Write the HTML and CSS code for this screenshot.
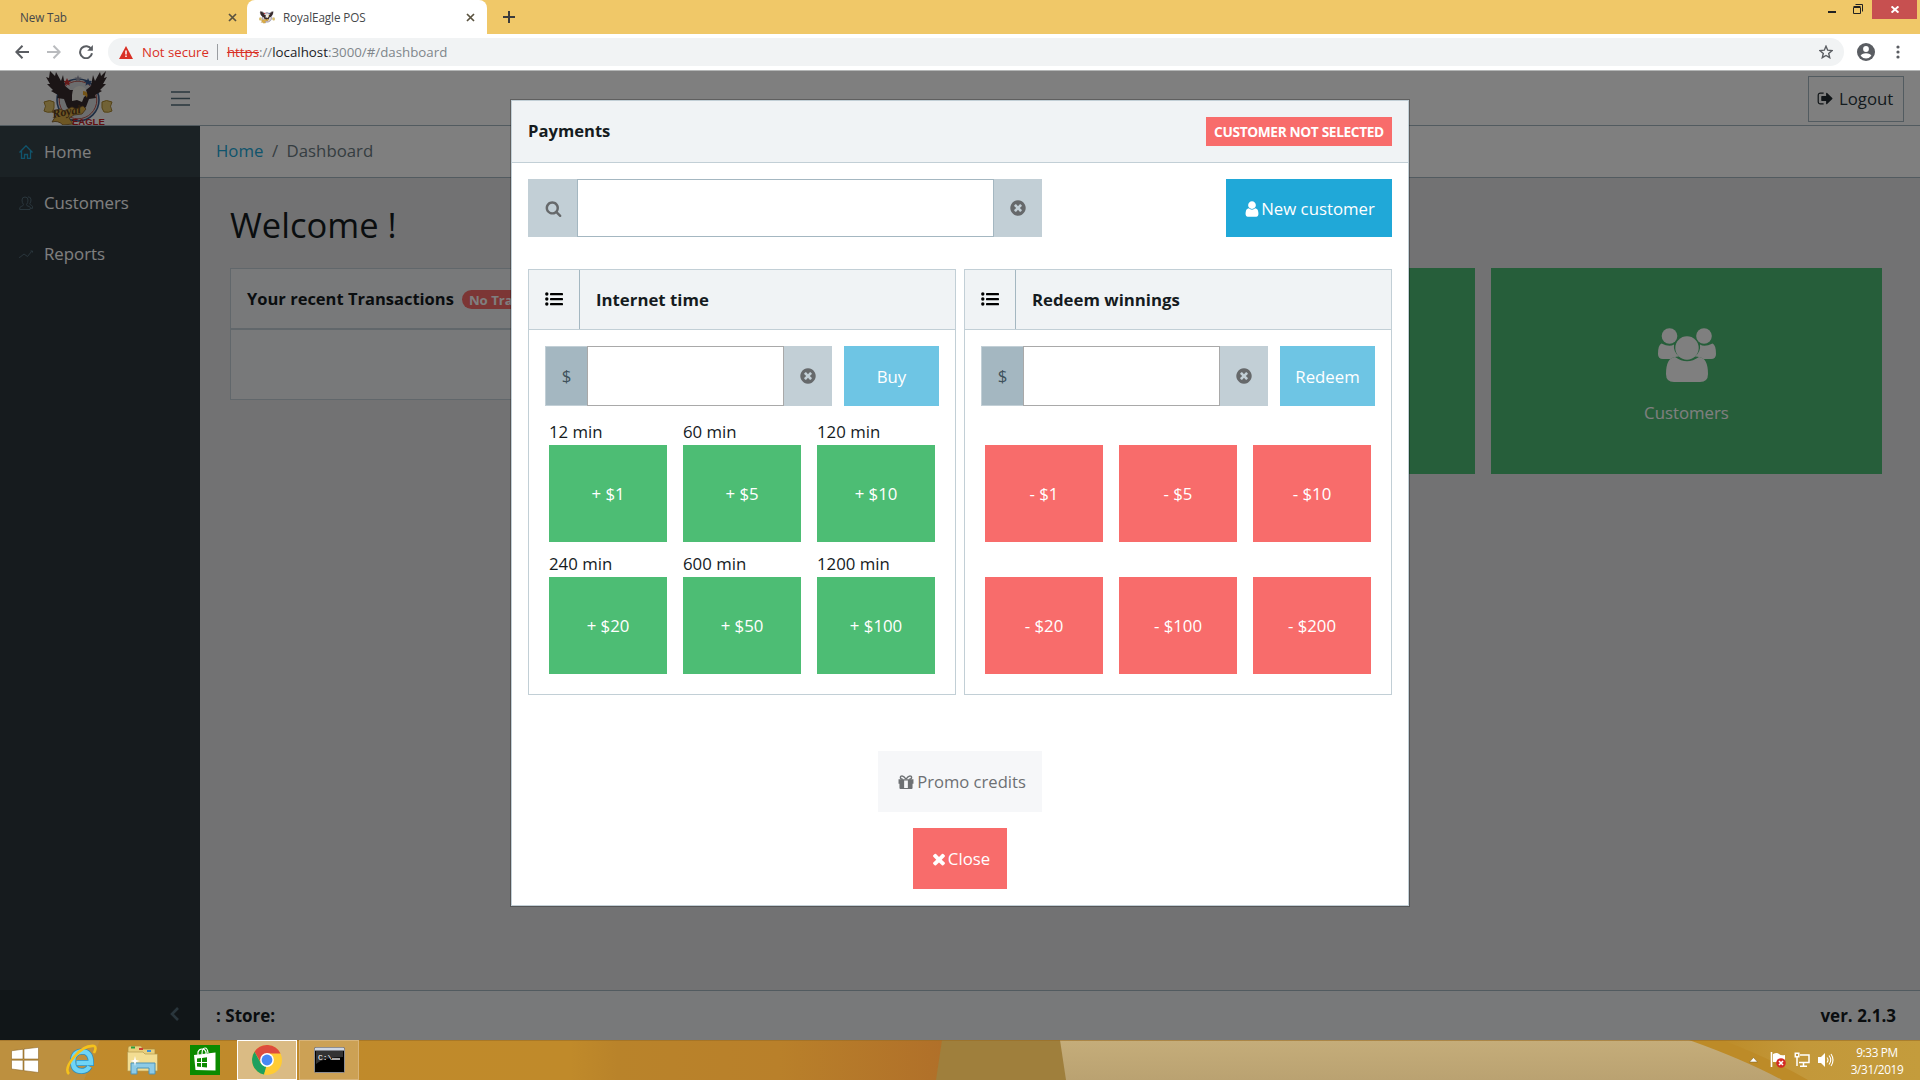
FILE: index.html
```html
<!DOCTYPE html>
<html lang="en">
<head>
<meta charset="utf-8">
<title>RoyalEagle POS</title>
<link rel="stylesheet" href="styles.css">
</head>
<body>
<svg class="defs" width="0" height="0">
  <symbol id="i-clear" viewBox="0 0 1792 1792"><path d="M1277 1122q0-26-19-45l-181-181 181-181q19-19 19-45 0-27-19-46l-90-90q-19-19-46-19-26 0-45 19l-181 181-181-181q-19-19-45-19-27 0-46 19l-90 90q-19 19-19 46 0 26 19 45l181 181-181 181q-19 19-19 45 0 27 19 46l90 90q19 19 46 19 26 0 45-19l181-181 181 181q19 19 45 19 27 0 46-19l90-90q19-19 19-46zm387-226q0 209-103 385.500t-279.500 279.500-385.500 103-385.500-103-279.500-279.500-103-385.500 103-385.500 279.500-279.500 385.500-103 385.500 103 279.500 279.500 103 385.500z"/></symbol>
  <symbol id="i-list" viewBox="0 0 18 14"><circle cx="1.8" cy="2" r="1.7"/><circle cx="1.8" cy="7" r="1.7"/><circle cx="1.8" cy="12" r="1.7"/><rect x="5" y="1" width="13" height="2.2" rx=".4"/><rect x="5" y="6" width="13" height="2.2" rx=".4"/><rect x="5" y="11" width="13" height="2.2" rx=".4"/></symbol>
  <symbol id="i-eagle" viewBox="0 0 70 54">
    <circle cx="35" cy="29" r="21" fill="#d9dadd" stroke="#3c5a86" stroke-width="1.6"/>
    <circle cx="35" cy="29" r="18.800" fill="none" stroke="#b8524c" stroke-width="1"/>
    <path d="M24 7l1.200 2.700 3 .2-2.300 1.900.8 2.900-2.700-1.600-2.600 1.600.8-2.900-2.300-1.900 3-.2z" fill="#c33"/>
    <path d="M35 4l1 2.500h2.600l-2 1.700.7 2.600-2.300-1.500-2.300 1.500.7-2.600-2-1.700H34z" fill="#99a"/>
    <path d="M45 7l1.200 2.700 3 .2-2.300 1.900.8 2.900-2.700-1.600-2.600 1.600.8-2.900-2.300-1.900 3-.2z" fill="#36578a"/>
    <path d="M1 31q6-3 10 0 1 7-2 10-5 1-8-1 3-5 0-9zM69 31q-6-3-10 0-1 7 2 10 5 1 8-1-3-5 0-9z" fill="#e3c56c" stroke="#a8852e"/>
    <path d="M7 0l5 5 1-4 5 9 2-6 2 11 5 4h16l5-4 2-11 2 6 5-9 1 4 5-5-2 7 3-1-4 7 3 0-6 6 2 1-7 4 1 3-7 1-3 8-7 7H31l-7-7-3-8-7-1 1-3-7-4 2-1-6-6h3L3 6l3 1z" fill="#362a2d"/>
    <path d="M29 24q0-8 7-9 8 0 8 9l-3 2-2 5-5-2-5 1z" fill="#efece4"/>
    <path d="M40 20q6 0 4 7-1-3-4-3z" fill="#e9a92f"/>
    <path d="M9 41l8-3 4 2 8-4 4 2 7-3 3 3-4 5-8 1-5 3 4 6-10 1q-5-5-11-3l5-8z" fill="#dcae49" stroke="#7d5925" stroke-width=".8"/>
  </symbol>
</svg>

<div class="tabs">
  <div class="tab"><span>New Tab</span><svg class="x" viewBox="0 0 9 9"><path d="M1 1l7 7M8 1L1 8"/></svg></div>
  <div class="tab active"><svg class="favicon"><use href="#i-eagle"/></svg><span>RoyalEagle POS</span><svg class="x" viewBox="0 0 9 9"><path d="M1 1l7 7M8 1L1 8"/></svg></div>
  <svg class="plus" viewBox="0 0 12 12"><path d="M6 0v12M0 6h12"/></svg>
  <div class="win">
    <svg width="8" height="2"><rect width="8" height="2" fill="#222"/></svg>
    <svg class="restore" width="10" height="10" fill="none" stroke="#222"><path d="M2.500.5h7v7" /><path d="M.5 3.500h7v6h-7zM.5 2.500h7"/></svg>
    <div class="win-close"><svg width="8" height="7" viewBox="0 0 8 7"><path d="M.6.4l6.800 6.200M7.400.4L.6 6.600" stroke="#fff" stroke-width="1.900"/></svg></div>
  </div>
</div>

<div class="toolbar">
  <svg class="nav" viewBox="0 0 14 14"><path d="M14 7H1.500M7.500.8L1.300 7l6.200 6.200"/></svg>
  <svg class="nav off" viewBox="0 0 14 14"><path d="M0 7h12.500M6.500.8L12.700 7l-6.200 6.200"/></svg>
  <svg class="nav" viewBox="0 0 14 14"><path d="M12.300 4.200A6 6 0 1 0 13 8.300"/><path d="M13.900 0v5.800H8.200z" class="solid"/></svg>
  <div class="omnibox">
    <svg width="14" height="13" viewBox="0 0 14 13"><path d="M7 0l7 13H0z" fill="#d93025"/><path d="M7 4.500v4M7 9.500v1.600" stroke="#fff" stroke-width="1.500"/></svg>
    <span class="insecure">Not secure</span>
    <span class="url"><s>https</s>://<b>localhost</b>:3000/#/dashboard</span>
    <svg class="star" width="14" height="14" viewBox="0 0 14 14"><path d="M7 1.200l1.700 4 4.300.4-3.300 2.900 1 4.200L7 10.500l-3.700 2.200 1-4.200L1 5.600l4.300-.4z"/></svg>
  </div>
  <svg class="avatar" width="18" height="18" viewBox="0 0 18 18"><circle cx="9" cy="9" r="9" fill="#5a5d62"/><circle cx="9" cy="6" r="2.900" fill="#fff"/><path d="M3.600 12.800q1-2.600 5.400-2.600t5.400 2.600Q12.300 15.500 9 15.500t-5.400-2.700z" fill="#fff"/></svg>
  <svg class="dots" width="4" height="14"><circle cx="2" cy="2" r="1.600"/><circle cx="2" cy="7" r="1.600"/><circle cx="2" cy="12" r="1.600"/></svg>
</div>

<div class="app">
  <header class="app-header">
    <svg class="logo" viewBox="0 0 70 54"><use href="#i-eagle" width="70" height="54"/><text x="10" y="47" transform="rotate(-10 10 47)" class="logo-script">Royal</text><text x="29" y="53.500" class="logo-block">EAGLE</text></svg>
    <svg class="burger" width="19" height="15"><path d="M0 1h19M0 7.500h19M0 14h19"/></svg>
    <div class="logout"><svg width="17" height="17" viewBox="0 0 1792 1792"><path d="M704 1440q0 4 1 20t.5 26.500-3 23.500-10 19.500-20.500 6.500h-320q-119 0-203.500-84.500t-84.500-203.500v-704q0-119 84.500-203.500t203.500-84.500h320q13 0 22.500 9.500t9.500 22.500q0 4 1 20t.5 26.500-3 23.500-10 19.500-20.500 6.500h-320q-66 0-113 47t-47 113v704q0 66 47 113t113 47h312l11.500 1 11.500 3 8 5.500 7 9 2 13.500zm928-544q0 26-19 45l-544 544q-19 19-45 19t-45-19-19-45v-288h-448q-26 0-45-19t-19-45v-384q0-26 19-45t45-19h448v-288q0-26 19-45t45-19 45 19l544 544q19 19 19 45z"/></svg><span>Logout</span></div>
  </header>
  <div class="app-body">
    <nav class="sidebar">
      <div class="item current"><svg viewBox="0 0 14 14"><path d="M.5 7.500L7 .8l6.500 6.700M2.500 6v7.500H5.500V9.500h3v4h3V6"/></svg>Home</div>
      <div class="item"><svg viewBox="0 0 14 14"><path d="M3 4q0-3 3-3t3 3-1.500 4.500q0 1.500 2.500 2t1 3H.7q-.5-2.500 1.500-3t2.300-2Q3 7 3 4zM9 .8q3 0 3 3 0 2.500-1.200 3.700.2 1.500 1.800 2t1 2.800h-2"/></svg>Customers</div>
      <div class="item"><svg viewBox="0 0 14 14"><path d="M0 10.500l1-.3L5 7l3.500 2.500 4-5M11.500 4h2v1.500"/></svg>Reports</div>
      <div class="minimizer"><svg width="9" height="14" viewBox="0 0 9 14"><path d="M8 1L2 7l6 6"/></svg></div>
    </nav>
    <main class="main">
      <div class="crumbs"><span class="link">Home</span><span>/</span><span>Dashboard</span></div>
      <div class="content">
        <h1>Welcome !</h1>
        <div class="tiles">
          <section class="recent">
            <div class="recent-head">Your recent Transactions <span class="pill">No Transactions</span></div>
            <div class="recent-body"></div>
          </section>
          <div class="tile"></div>
          <div class="tile">
            <svg width="58" height="54" viewBox="0 0 58 54"><circle cx="11.500" cy="8" r="7.800"/><circle cx="46" cy="8" r="7.800"/><path d="M3.500 15.500q8 4 12.500 1-1 7 5 12-6 0-8.500 2.500H5q-5 0-5-5 0-9 3.500-10.500zM54.500 15.500q-8 4-12.500 1 1 7-5 12 6 0 8.500 2.500H53q5 0 5-5 0-9-3.500-10.500z"/><circle cx="29" cy="20" r="11.700"/><path d="M17 29q12 8.500 24 0 9 1 9 17 0 8-8 8H16q-8 0-8-8 0-16 9-17z"/></svg>
            <span>Customers</span>
          </div>
        </div>
      </div>
      <footer class="app-footer"><span>: Store:</span><span>ver. 2.1.3</span></footer>
    </main>
  </div>
  <div class="backdrop"></div>
</div>

<div class="modal">
  <div class="modal-card">
    <div class="modal-head"><span class="modal-title">Payments</span><span class="badge">CUSTOMER NOT SELECTED</span></div>
    <div class="modal-body">
      <div class="search-row">
        <div class="group search">
          <div class="addon plain"><svg width="17" height="17" viewBox="0 0 1792 1792"><path d="M1216 832q0-185-131.500-316.500t-316.500-131.500-316.500 131.500-131.500 316.500 131.500 316.500 316.500 131.500 316.500-131.500 131.500-316.500zm512 832q0 52-38 90t-90 38q-54 0-90-38l-343-342q-179 124-399 124-143 0-273.500-55.500t-225-150-150-225-55.500-273.500 55.500-273.500 150-225 225-150 273.500-55.500 273.500 55.500 225 150 150 225 55.500 273.500q0 220-124 399l343 343q37 37 37 90z"/></svg></div>
          <div class="field"></div>
          <div class="clear"><svg width="18" height="18"><use href="#i-clear"/></svg></div>
        </div>
        <div class="btn primary"><svg width="18" height="18" viewBox="0 0 1792 1792"><path d="M1536 1399q0 109-62.500 187t-150.500 78h-854q-88 0-150.500-78t-62.500-187q0-85 8.500-160.500t31.500-152 58.500-131 94-89 134.500-34.500q131 128 313 128t313-128q76 0 134.500 34.500t94 89 58.500 131 31.500 152 8.500 160.500zm-256-887q0 159-112.500 271.500t-271.500 112.500-271.500-112.500-112.500-271.500 112.500-271.500 271.500-112.500 271.500 112.500 112.500 271.500z"/></svg>New customer</div>
      </div>
      <div class="panels">
        <section class="panel">
          <div class="panel-head"><div class="panel-icon"><svg width="18" height="14"><use href="#i-list"/></svg></div><span>Internet time</span></div>
          <div class="panel-body">
            <div class="amount">
              <div class="group"><div class="addon">$</div><div class="field gray"></div><div class="clear"><svg width="18" height="18"><use href="#i-clear"/></svg></div></div>
              <div class="btn pale">Buy</div>
            </div>
            <div class="grid">
              <div><label>12 min</label><div class="cash add">+ $1</div></div>
              <div><label>60 min</label><div class="cash add">+ $5</div></div>
              <div><label>120 min</label><div class="cash add">+ $10</div></div>
              <div><label>240 min</label><div class="cash add">+ $20</div></div>
              <div><label>600 min</label><div class="cash add">+ $50</div></div>
              <div><label>1200 min</label><div class="cash add">+ $100</div></div>
            </div>
          </div>
        </section>
        <section class="panel">
          <div class="panel-head"><div class="panel-icon"><svg width="18" height="14"><use href="#i-list"/></svg></div><span>Redeem winnings</span></div>
          <div class="panel-body">
            <div class="amount">
              <div class="group"><div class="addon">$</div><div class="field gray"></div><div class="clear"><svg width="18" height="18"><use href="#i-clear"/></svg></div></div>
              <div class="btn pale">Redeem</div>
            </div>
            <div class="grid">
              <div><label></label><div class="cash sub">- $1</div></div>
              <div><label></label><div class="cash sub">- $5</div></div>
              <div><label></label><div class="cash sub">- $10</div></div>
              <div><label></label><div class="cash sub">- $20</div></div>
              <div><label></label><div class="cash sub">- $100</div></div>
              <div><label></label><div class="cash sub">- $200</div></div>
            </div>
          </div>
        </section>
      </div>
      <div class="actions">
        <div class="btn promo"><svg width="16" height="14" viewBox="0 0 16 15"><path d="M4.500 4.500Q2 4.500 2 2.700T4 1q1.800 0 4 3.500M11.500 4.500Q14 4.500 14 2.700T12 1q-1.800 0-4 3.500" fill="none" stroke="currentColor" stroke-width="1.500"/><path fill-rule="evenodd" d="M0 4.500h16v4.800h-1V14q0 1-1 1H2q-1 0-1-1V9.300H0zM6 6v8h4V6z"/></svg>Promo credits</div>
        <div class="btn close"><svg width="18" height="18" viewBox="0 0 1792 1792"><path d="M1490 1322q0 40-28 68l-136 136q-28 28-68 28t-68-28l-294-294-294 294q-28 28-68 28t-68-28l-136-136q-28-28-28-68t28-68l294-294-294-294q-28-28-28-68t28-68l136-136q28-28 68-28t68 28l294 294 294-294q28-28 68-28t68 28l136 136q28 28 28 68t-28 68l-294 294 294 294q28 28 28 68z"/></svg>Close</div>
      </div>
    </div>
  </div>
</div>

<div class="taskbar">
  <svg class="wallpaper" viewBox="0 0 1920 40" preserveAspectRatio="none">
    <defs>
      <linearGradient id="w1"><stop offset="0" stop-color="#c08a2c"/><stop offset=".6" stop-color="#c08a2a"/><stop offset=".65" stop-color="#b9832a"/><stop offset=".82" stop-color="#b9802a"/><stop offset="1" stop-color="#b06f29"/></linearGradient>
      <linearGradient id="w2" x2="0" y2="1"><stop offset="0" stop-color="#c5ad7a"/><stop offset="1" stop-color="#baa271"/></linearGradient>
      <linearGradient id="w3"><stop offset="0" stop-color="#bd8c29"/><stop offset=".4" stop-color="#c3983a"/><stop offset="1" stop-color="#c49c3c"/></linearGradient>
    </defs>
    <rect width="950" height="40" fill="url(#w1)"/>
    <path d="M0 0h100L84 40H0z" fill="#bd903f"/>
    <path d="M942 0h122l6 40H936z" fill="#9f7f3c"/>
    <path d="M1060 0h860v40H1066z" fill="url(#w2)"/>
    <path d="M1689 0h231v40H1782Q1745 20 1689 0z" fill="#bd8b28"/>
    <path d="M1722 0h198v40H1808Q1770 18 1722 0z" fill="url(#w3)"/>
    <rect width="1920" height="1" fill="#9a6d24" opacity=".6"/>
  </svg>
  <div class="task start"><svg width="28" height="26" viewBox="0 0 28 26" fill="#fff" stroke="#8e6a2a" stroke-width=".6"><path d="M.5 3.800L12 2.200V12H.5zM13 2L27.500.3V12H13zM.5 13.200H12V23.500L.5 22zM13 13.200h14.500v12.300L13 23.700z"/></svg></div>
  <div class="task ie"><svg width="32" height="32" viewBox="0 0 32 32"><path d="M24.500 22.500Q22 27 16.500 27 8 27 8 17.500T17 7.500q9 0 9 11.500H11.500" fill="none" stroke="#2c8fc0" stroke-width="6"/><path d="M24.500 22.500Q22 27 16.500 27 8 27 8 17.500T17 7.500q9 0 9 11.500H11.500" fill="none" stroke="#6fd4f5" stroke-width="4.500"/><path d="M4 30Q-1 25 9 13T29 2q3 1 0 7" fill="none" stroke="#f5c21b" stroke-width="2.600"/></svg></div>
  <div class="task folder"><svg width="34" height="30" viewBox="0 0 34 30"><path d="M2 3q0-2 2-2h11l2 3h12v6H2z" fill="#e9cf7c" stroke="#a98a3c" stroke-width=".7"/><rect x="5" y="1.500" width="4" height="2" fill="#2b9f3c"/><rect x="13" y="3" width="4" height="2" fill="#cf3f30"/><rect x="21" y="5" width="4" height="2" fill="#3b8fd8"/><path d="M1.500 7H17l2 2h12.500v17H1.500z" fill="#f3dd92" stroke="#b59a4f" stroke-width=".7"/><path d="M5 18h24v11h-6v-6H11v6H5z" fill="#8ecbe6" stroke="#4c94b8"/><path d="M9 11l1 4 4 1-4 1-1 4-1-4-4-1 4-1z" fill="#fff"/></svg></div>
  <div class="task store"><svg width="30" height="30" viewBox="0 0 30 30"><path d="M0 0h30v30H0z" fill="#0b8a00"/><path d="M4 10l21.500-2.500v18L5.500 25z" fill="#fff"/><path d="M8 10V7q1-3 4-3t4 3v2M12 9q0-6 3-6 2.500 0 3 5" fill="none" stroke="#fff" stroke-width="1.200"/><path d="M7 13.500l4-.5v4H7zM12 12.900l5-.6V17h-5zM7 18h4v4l-4-.5zM12 18h5v4.600l-5-.6z" fill="#0b8a00"/></svg></div>
  <div class="task win-btn on"><svg width="30" height="30" viewBox="0 0 30 30"><circle cx="15" cy="15" r="15" fill="#fc3"/><path d="M15 15V8.500h13.500A15 15 0 0 0 2.500 6.700L8.500 17z" fill="#dd4b3e"/><path d="M2.500 6.700L9 18.500l6 3.200-3 7.900A15 15 0 0 1 2.500 6.700z" fill="#1da05f"/><path d="M12 29.700l7-10.200L16 15z" fill="#fc3"/><circle cx="15" cy="15" r="6.900" fill="#fff"/><circle cx="15" cy="15" r="5.400" fill="#4787f3"/></svg></div>
  <div class="task win-btn"><svg width="31" height="26" viewBox="0 0 31 26"><rect x=".5" y=".5" width="30" height="25" rx="1" fill="#000" stroke="#8e8e92"/><rect x="1" y="1" width="29" height="2.600" fill="#cfd6e2"/><path d="M2 4h27v6Q10 10 2 17z" fill="#333"/><text x="4" y="13" class="prompt">C:\</text><path d="M18 12h8" stroke="#fff" stroke-width="1.300"/></svg></div>
  <div class="tray">
    <svg width="9" height="6" viewBox="0 0 9 6"><path d="M4.500.5L8.500 5h-8z" fill="#fff" stroke="#775c20" stroke-width=".5"/></svg>
    <svg width="16" height="16" viewBox="0 0 16 16"><path d="M1.500 0v15" stroke="#fff" stroke-width="1.600"/><path d="M3 2q4-2 6 0t6 1v7H3z" fill="#fff"/><circle cx="11" cy="11" r="4.800" fill="#d42a24"/><path d="M9 9l4 4M13 9l-4 4" stroke="#fff" stroke-width="1.600"/></svg>
    <svg width="16" height="16" viewBox="0 0 16 16" fill="none" stroke="#fff" stroke-width="1.500"><path d="M6 3h9v7.500H5M9.500 10.500V14M6 14.300h7"/><path d="M1.300 1.200h3.500v3.500H1.300zM3 5v9"/></svg>
    <svg width="16" height="16" viewBox="0 0 16 16"><path d="M0 5h3l4-4v14l-4-4H0z" fill="#fff"/><path d="M9 5.500q2 2.500 0 5M11 3.500q3.500 4.500 0 9M13 2q4 6 0 12" fill="none" stroke="#fff" stroke-width="1.100"/></svg>
    <div class="clock"><span>9:33 PM</span><span>3/31/2019</span></div>
  </div>
</div>
</body>
</html>
```
FILE: styles.css
```css
* { box-sizing: border-box; }
body {
  margin: 0;
  width: 1920px;
  height: 1080px;
  overflow: hidden;
  display: flex;
  flex-direction: column;
  position: relative;
  font-family: "Open Sans", "Noto Sans", sans-serif;
  font-size: 16.8px;
  line-height: 26px;
  color: #151b1e;
}
svg { display: block; flex: none; }
.defs { position: absolute; }

/* Browser chrome */
.tabs {
  height: 34px;
  flex: none;
  display: flex;
  background: #f0c868;
  font-size: 11.7px;
  color: #45474a;
  letter-spacing: -.1px;
}
.tab { width: 247px; height: 34px; display: flex; align-items: center; padding: 0 10px 0 20px; }
.tab span { flex: 1; }
.tab.active { width: 240px; padding: 0 12px; background: #fff; border-radius: 8px 8px 0 0; }
.favicon { width: 16px; height: 16px; margin-right: 8px; }
.x { width: 9px; height: 9px; }
.x path { stroke: #5a5340; stroke-width: 1.7; }
.plus { width: 12px; height: 12px; margin: 11px 0 0 16px; }
.plus path { stroke: #3c3c3c; stroke-width: 2; }
.win { display: flex; margin-left: auto; padding-right: 3px; align-items: flex-start; }
.win > svg:first-child { margin: 11px 17px 0 0; }
.restore { margin: 4px 9px 0 0; }
.win-close { width: 45px; height: 19px; background: #c75050; display: flex; align-items: center; justify-content: center; }

.toolbar {
  height: 37px;
  flex: none;
  display: flex;
  align-items: center;
  padding: 0 20px 0 15px;
  background: #fff;
  border-bottom: 1px solid #b4b6b6;
  font-size: 13.2px;
}
.nav { width: 14px; height: 14px; margin-right: 18px; fill: none; stroke: #5a5d62; stroke-width: 2; }
.nav.off { stroke: #b9bbbe; }
.nav .solid { fill: #5a5d62; stroke: none; }
.omnibox {
  width: 1736px;
  height: 28px;
  margin-left: -3px;
  border-radius: 14px;
  background: #f1f3f4;
  display: flex;
  align-items: center;
  padding: 0 11px;
}
.insecure { color: #d93025; margin-left: 9px; padding-right: 8px; border-right: 1px solid #9a9da1; line-height: 16px; }
.url { margin-left: 9px; color: #80868b; font-size: 13.3px; }
.url s { color: #d93025; }
.url b { color: #202124; font-weight: 400; }
.star { margin-left: auto; fill: none; stroke: #5a5d62; stroke-width: 1.4; }
.avatar { margin-left: 13px; }
.dots { margin-left: auto; fill: #5a5d62; }

/* Application shell */
.app { height: 969px; flex: none; display: flex; flex-direction: column; position: relative; background: #e4e5e6; }
.backdrop { position: absolute; inset: 0; background: rgba(0, 0, 0, .5); }
.app-header {
  height: 55px;
  flex: none;
  display: flex;
  align-items: center;
  background: #fff;
  border-bottom: 1px solid #a4b7c1;
}
.logo { width: 70px; height: 54px; margin-left: 43px; }
.logo-script { font: italic bold 12px "Liberation Serif", serif; fill: #5b3d1c; }
.logo-block { font: bold 9.500px "Liberation Sans", sans-serif; fill: #c4201f; }
.burger { margin-left: 58px; stroke: #536c79; stroke-width: 1.6; }
.logout {
  width: 96px;
  height: 46px;
  margin: 1px 16px 0 auto;
  border: 1px solid #a4b7c1;
  display: flex;
  align-items: center;
  padding-left: 8px;
  gap: 5px;
  color: #29363d;
}
.logout svg { fill: #20292e; }
.app-body { flex: 1; display: flex; }
.sidebar { width: 200px; background: #2d363c; display: flex; flex-direction: column; color: #fff; }
.item { height: 51px; padding: 0 19px; display: flex; align-items: center; gap: 11px; }
.item svg { width: 14px; height: 14px; fill: none; stroke: #536c79; stroke-width: 1; }
.item.current { background: #37454b; }
.item.current svg { stroke: #20a8d8; stroke-width: 1.3; }
.minimizer { height: 50px; margin-top: auto; background: #232c30; display: flex; align-items: center; justify-content: flex-end; padding: 0 21px 2px 0; }
.minimizer path { fill: none; stroke: #536c79; stroke-width: 2.6; }
.main { flex: 1; display: flex; flex-direction: column; }
.crumbs { height: 52px; display: flex; align-items: center; gap: 8.5px; padding: 0 0 1px 16px; background: #fff; border-bottom: 1px solid #a4b7c1; color: #6b7a82; }
.crumbs .link { color: #20a8d8; }
.content { flex: 1; padding: 26px 38px 0 30px; }
h1 { margin: 0; height: 64px; font-size: 34.5px; font-weight: 400; line-height: 41px; }
.tiles { display: grid; grid-template-columns: 838px 391px 391px; justify-content: space-between; align-items: start; }
.recent { border: 1px solid #c2cfd6; background: #f0f3f5; }
.recent-head { height: 61px; border-bottom: 2px solid #c2cfd6; padding-left: 16px; display: flex; align-items: center; font-weight: 700; font-size: 16.5px; }
.recent-body { height: 69px; }
.pill { margin: 2px 0 0 8px; padding: 0 7px; height: 19px; border-radius: 10px; background: #f86c6b; color: #fff; font-size: 13.2px; line-height: 20px; }
.tile { height: 206px; background: #4dbd74; color: #fff; display: flex; flex-direction: column; align-items: center; padding-top: 60px; }
.tile svg { fill: #fff; margin-bottom: 18px; }
.app-footer {
  height: 50px;
  display: flex;
  align-items: center;
  justify-content: space-between;
  padding: 0 24px 0 16px;
  background: #f0f3f5;
  border-top: 1px solid #a4b7c1;
  font-weight: 700;
  font-size: 17px;
}

/* Payments dialog */
.modal { position: absolute; left: 510px; top: 99px; width: 900px; height: 808px; border: 1px solid rgba(0, 0, 0, .25); }
.modal-card { height: 806px; border: 1px solid #c2cfd6; background: #fff; }
.modal-head { height: 62px; padding: 0 16px; display: flex; align-items: center; justify-content: space-between; background: #f0f3f5; border-bottom: 1px solid #c2cfd6; }
.modal-title { font-weight: 700; font-size: 16.6px; padding-bottom: 1px; }
.badge { width: 186px; height: 29px; background: #f86c6b; color: #fff; font-weight: 700; font-size: 13.7px; line-height: 30px; text-align: center; letter-spacing: -.35px; white-space: nowrap; }
.modal-body { padding: 16px; }
.search-row { display: flex; justify-content: space-between; height: 58px; margin-bottom: 32px; }
.group { display: flex; width: 287px; }
.group.search { width: 514px; }
.addon { width: 42px; border: 1px solid #c2cfd6; border-right: 0; background: #a4b7c1; display: flex; align-items: center; justify-content: center; color: #3e515b; }
.addon.plain { width: 49px; background: #c2cfd6; fill: #66696b; }
.field { flex: 1; border: 1px solid #a4b7c1; background: #fff; }
.field.gray { border-color: #a9a9a9; }
.clear { width: 48px; background: #c2cfd6; fill: #66696b; display: flex; align-items: center; justify-content: center; }
.btn { display: flex; align-items: center; justify-content: center; color: #fff; fill: currentColor; }
.primary { width: 166px; background: #20a8d8; padding-top: 1px; }
.pale { width: 95px; background: #6ec5e4; padding-top: 1px; }
.panels { display: grid; grid-template-columns: 428px 428px; gap: 8px; }
.panel { height: 426px; border: 1px solid #c2cfd6; }
.panel-head { height: 60px; display: flex; align-items: center; background: #f0f3f5; border-bottom: 1px solid #c2cfd6; font-weight: 700; font-size: 16.8px; }
.panel-icon { width: 51px; height: 59px; margin-right: 16px; border-right: 1px solid #a4b7c1; display: flex; align-items: center; justify-content: center; padding-bottom: 2px; }
.panel-body { padding: 16px; }
.amount { height: 60px; display: flex; justify-content: space-between; margin-bottom: 13px; }
.grid { display: grid; grid-template-columns: repeat(3, 118px); gap: 9px 16px; padding-left: 4px; }
label { display: block; height: 26px; line-height: 25px; }
.cash { height: 97px; display: flex; align-items: center; justify-content: center; color: #fff; }
.add { background: #4dbd74; }
.sub { background: #f86c6b; }
.actions { display: flex; flex-direction: column; align-items: center; gap: 16px; margin-top: 56px; }
.actions .btn { height: 61px; }
.promo { width: 164px; gap: 3px; padding-left: 4px; background: #f6f7f9; color: #6d7073; font-size: 16.600px; }
.close { width: 94px; background: #f86c6b; }

/* Taskbar */
.taskbar { height: 40px; flex: none; position: relative; display: flex; }
.wallpaper { position: absolute; inset: 0; width: 1920px; height: 40px; }
.task { position: relative; display: flex; align-items: center; justify-content: center; }
.start { width: 50px; }
.ie { width: 62px; }
.folder { width: 62px; }
.store { width: 62px; }
.win-btn { width: 60px; border: 1px solid #d8b479; margin: 0 1px; background: rgba(255, 255, 255, .2); }
.win-btn.on { border: 1px solid #fff; background: rgba(255, 255, 255, .42); }
.prompt { font: 8px "Liberation Mono", monospace; fill: #fff; }
.tray { position: relative; margin-left: auto; display: flex; align-items: center; gap: 8px; padding-right: 17px; }
.tray > svg:first-child { margin-right: 4px; }
.clock { width: 52px; margin-left: 9px; display: flex; flex-direction: column; align-items: center; color: #fff; font-size: 11.8px; line-height: 17px; letter-spacing: -.35px; padding-top: 2px; white-space: nowrap; }
```
